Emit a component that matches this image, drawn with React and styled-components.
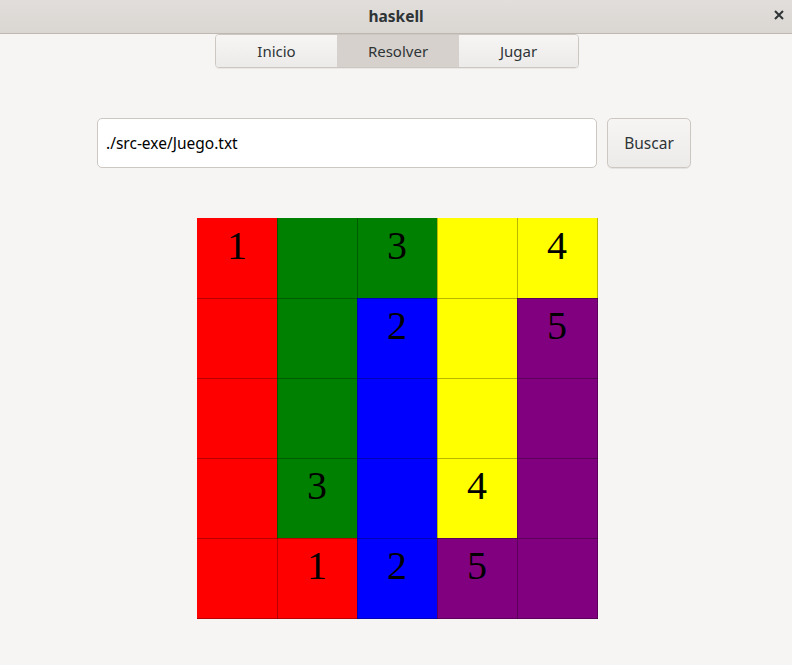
import React from 'react'
import styled, { createGlobalStyle } from 'styled-components'

const GlobalStyle = createGlobalStyle`
  html, body {
    margin: 0;
    padding: 0;
    background: #f6f5f4;
  }
  body {
    font-family: "Noto Sans", "DejaVu Sans", sans-serif;
    color: #2e3436;
  }
  * {
    box-sizing: border-box;
  }
`

const Window = styled.div`
  width: 792px;
  height: 665px;
  background: #f6f5f4;
  display: flex;
  flex-direction: column;
  align-items: center;
  overflow: hidden;
`

const TitleBar = styled.div`
  align-self: stretch;
  height: 34px;
  display: flex;
  align-items: center;
  justify-content: center;
  position: relative;
  background: linear-gradient(#e1dedb, #dad6d2);
  border-bottom: 1px solid #bfb8b1;
  font-weight: bold;
  font-size: 15.5px;
  padding-bottom: 2px;
  color: #2e3436;
`

const CloseButton = styled.span`
  position: absolute;
  right: 6px;
  top: 6px;
  width: 14px;
  height: 18px;
  display: flex;
  align-items: center;
  justify-content: center;
`

const Tabs = styled.div`
  display: flex;
  margin-left: 2px;
  border: 1px solid #cdc7c2;
  border-radius: 4px;
  overflow: hidden;
  box-shadow: 0 1px rgba(0, 0, 0, 0.05);
`

const Tab = styled.div`
  width: ${p => p.w}px;
  height: 32px;
  display: flex;
  align-items: center;
  justify-content: center;
  font-size: 15px;
  color: #2e3436;
  background: ${p => (p.active ? '#d6d1cd' : 'linear-gradient(#f6f5f4, #edebe9)')};
  & + & {
    border-left: 1px solid #d6d1cd;
  }
`

const SearchRow = styled.div`
  display: flex;
  gap: 10px;
  margin-top: 50px;
  margin-right: 4px;
`

const PathInput = styled.div`
  width: 500px;
  height: 50px;
  padding-left: 8px;
  display: flex;
  align-items: center;
  background: #ffffff;
  border: 1px solid #cdc7c2;
  border-radius: 5px;
  font-size: 15.5px;
  color: #000;
`

const Button = styled.div`
  width: 84px;
  height: 50px;
  display: flex;
  align-items: center;
  justify-content: center;
  border: 1px solid #cdc7c2;
  border-radius: 5px;
  background: linear-gradient(#f6f5f4, #edebe9);
  box-shadow: 0 1px rgba(0, 0, 0, 0.07);
  font-size: 15.5px;
  color: #2e3436;
`

const Board = styled.div`
  display: grid;
  grid-template-columns: repeat(4, 80px) 81px;
  grid-template-rows: repeat(4, 80px) 81px;
  margin-top: 50px;
  margin-left: 3px;
`

const LINE = 'rgba(0, 0, 0, 0.28)'

const Cell = styled.div`
  background: ${p => p.color};
  box-shadow: ${p =>
    [
      p.col > 0 && `inset 1px 0 ${LINE}`,
      p.row > 0 && `inset 0 1px ${LINE}`,
      p.col === 4 && `inset -1px 0 ${LINE}`,
      p.row === 4 && `inset 0 -1px ${LINE}`,
    ]
      .filter(Boolean)
      .join(', ') || 'none'};
  display: flex;
  justify-content: center;
  padding-top: 5px;
  padding-right: ${p => (p.col === 4 ? 1 : 0)}px;
  font-family: "Liberation Serif", "DejaVu Serif", serif;
  font-size: 40px;
  line-height: 46px;
  color: #000;
`

const R = '#ff0000'
const G = '#008000'
const B = '#0000ff'
const Y = '#ffff00'
const P = '#800080'

const board = [
  [[R, '1'], [G, ''], [G, '3'], [Y, ''], [Y, '4']],
  [[R, ''], [G, ''], [B, '2'], [Y, ''], [P, '5']],
  [[R, ''], [G, ''], [B, ''], [Y, ''], [P, '']],
  [[R, ''], [G, '3'], [B, ''], [Y, '4'], [P, '']],
  [[R, ''], [R, '1'], [B, '2'], [P, '5'], [P, '']],
]

export default function App() {
  return (
    <Window>
      <GlobalStyle />
      <TitleBar>
        haskell
        <CloseButton>
          <svg width="10" height="10" viewBox="0 0 10 10">
            <path d="M1 1 L9 9 M9 1 L1 9" stroke="#2e3436" strokeWidth="2" />
          </svg>
        </CloseButton>
      </TitleBar>
      <Tabs>
        <Tab w={121}>Inicio</Tab>
        <Tab w={121} active>Resolver</Tab>
        <Tab w={120}>Jugar</Tab>
      </Tabs>
      <SearchRow>
        <PathInput>./src-exe/Juego.txt</PathInput>
        <Button>Buscar</Button>
      </SearchRow>
      <Board>
        {board.map((cells, row) =>
          cells.map(([color, n], col) => (
            <Cell key={`${row}-${col}`} color={color} row={row} col={col}>
              {n}
            </Cell>
          ))
        )}
      </Board>
    </Window>
  )
}
